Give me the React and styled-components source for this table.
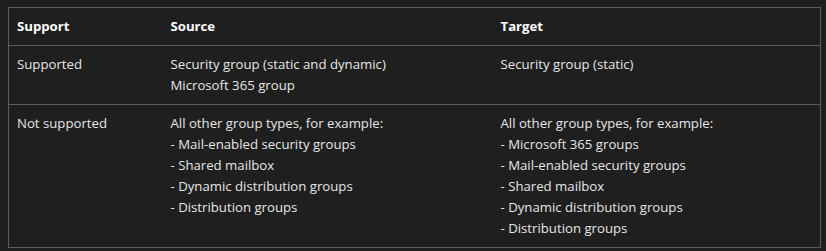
import React from 'react';
import styled, { createGlobalStyle } from 'styled-components';

const GlobalStyle = createGlobalStyle`
    html, body {
        margin: 0;
        background: #1f1f1f;
    }
    body {
        padding: 7px 7px 0 8px;
    }
`;

const rows = [
    {
        support: 'Supported',
        source: ['Security group (static and dynamic)', 'Microsoft 365 group'],
        target: ['Security group (static)'],
    },
    {
        support: 'Not supported',
        source: [
            'All other group types, for example:',
            '- Mail-enabled security groups',
            '- Shared mailbox',
            '- Dynamic distribution groups',
            '- Distribution groups',
        ],
        target: [
            'All other group types, for example:',
            '- Microsoft 365 groups',
            '- Mail-enabled security groups',
            '- Shared mailbox',
            '- Dynamic distribution groups',
            '- Distribution groups',
        ],
    },
];

const Table = styled.table`
    width: 812px;
    border-collapse: collapse;
    border: 1px solid #5c5c5c;
    table-layout: fixed;
    font-family: 'Segoe UI', 'Open Sans', sans-serif;
    font-size: 13.2px;
    line-height: 21px;
    color: #e6e6e6;
`;

const HeadCell = styled.th`
    box-sizing: border-box;
    width: ${props => props.$width}px;
    text-align: left;
    font-weight: 700;
    color: #ffffff;
    padding: 8px;
    border-bottom: 1px solid #5c5c5c;
`;

const Row = styled.tr`
    & + & td {
        border-top: 1px solid #5c5c5c;
    }
`;

const Cell = styled.td`
    vertical-align: top;
    padding: 8px;
`;

const Line = styled.div`
    white-space: nowrap;
`;

const Lines = ({ items }) => items.map(text => <Line key={text}>{text}</Line>);

export default function App() {
    return (
        <React.Fragment>
            <GlobalStyle />
            <Table>
                <thead>
                    <tr>
                        <HeadCell $width={154}>Support</HeadCell>
                        <HeadCell $width={330}>Source</HeadCell>
                        <HeadCell $width={328}>Target</HeadCell>
                    </tr>
                </thead>
                <tbody>
                    {rows.map(row => (
                        <Row key={row.support}>
                            <Cell>{row.support}</Cell>
                            <Cell><Lines items={row.source} /></Cell>
                            <Cell><Lines items={row.target} /></Cell>
                        </Row>
                    ))}
                </tbody>
            </Table>
        </React.Fragment>
    );
}
